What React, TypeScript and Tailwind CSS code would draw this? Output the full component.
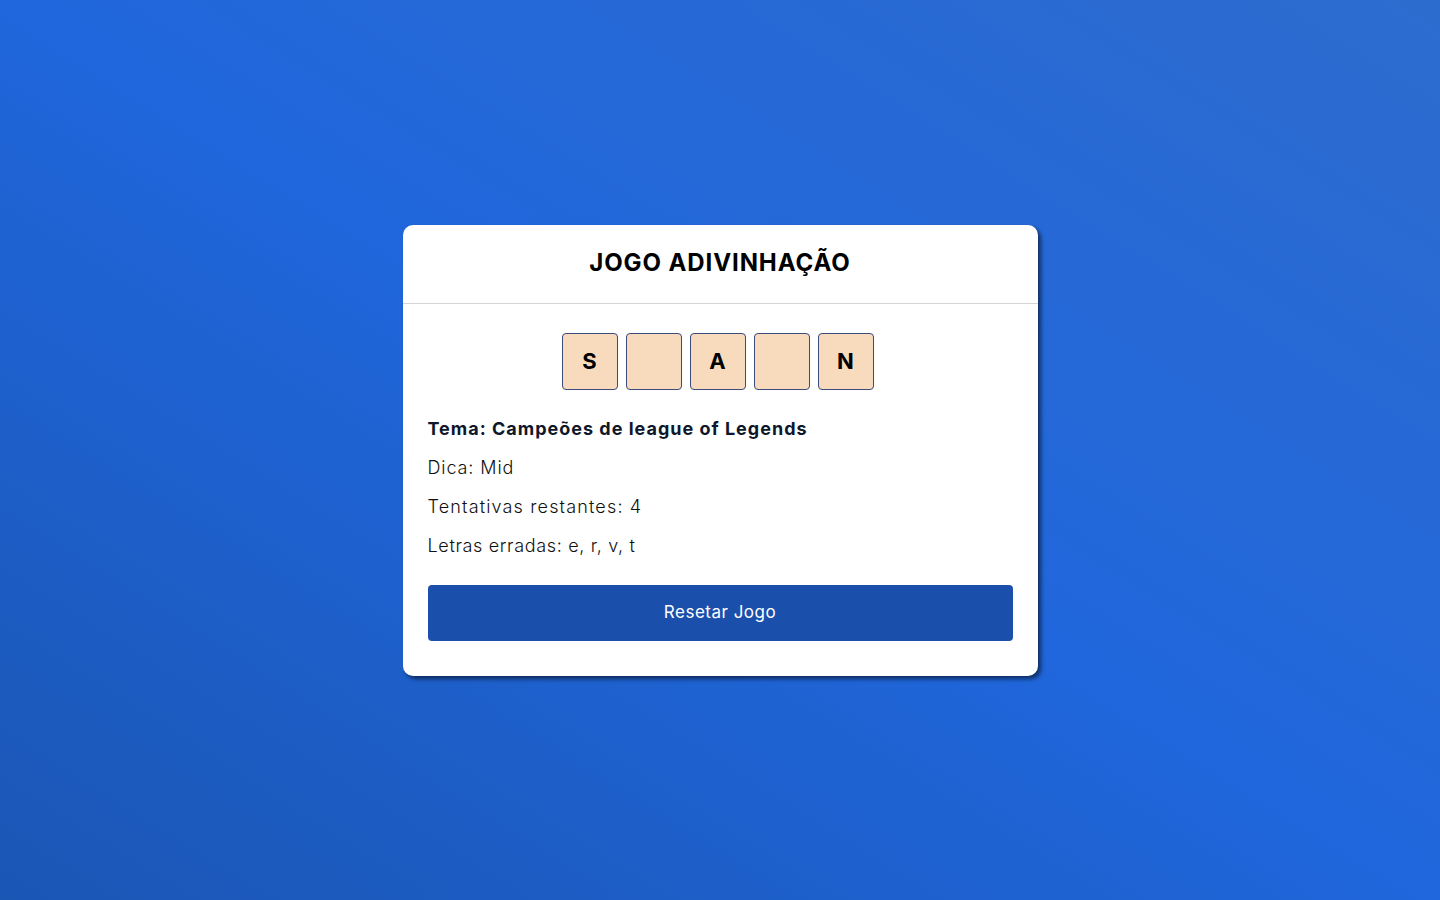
import React from "react";

export default function App() {
  const tiles = ["S", "", "A", "", "N"];
  return (
    <div
      className="w-full h-[900px] flex items-center justify-center bg-linear-to-tr from-[#1a56b4] via-[#2066dc] to-[#2d6ccf]"
      style={{ fontFamily: "Inter, 'Open Sans', sans-serif" }}
    >
      <div className="w-[635px] bg-white rounded-[10px] shadow-[3px_3px_4px_rgba(0,0,0,0.55)] overflow-hidden">
        <div className="h-[79px] flex items-center justify-center border-b border-[#d4d4d4]">
          <h1 className="text-[24px] font-bold text-black tracking-[0.9px] mt-[-1px]">JOGO ADIVINHAÇÃO</h1>
        </div>
        <div className="px-[25px] pt-[29px] pb-[35px]">
          <div className="flex justify-center gap-[8px] mr-[5px]">
            {tiles.map((t, i) => (
              <div
                key={i}
                className="w-[56px] h-[57px] bg-[#f8dbbd] border border-[#3c4a7c] rounded-[4px] flex items-center justify-center text-[22px] font-bold text-black"
              >
                {t}
              </div>
            ))}
          </div>
          <div className="mt-[25px] flex flex-col gap-[12px] text-[18px] text-[#111] tracking-[0.9px]">
            <p className="font-bold text-[#0f172a] leading-[27px] tracking-[1px]">Tema: Campeões de league of Legends</p>
            <p className="font-light leading-[27px]">Dica: Mid</p>
            <p className="font-light leading-[27px] tracking-[1.15px]">Tentativas restantes: 4</p>
            <p className="font-light leading-[27px] tracking-[0.65px]">Letras erradas: e, r, v, t</p>
          </div>
          <button className="mt-[26px] w-full h-[56px] bg-[#1a4fab] text-white text-[17px] tracking-[0.5px] rounded-[4px]">
            Resetar Jogo
          </button>
        </div>
      </div>
    </div>
  );
}
